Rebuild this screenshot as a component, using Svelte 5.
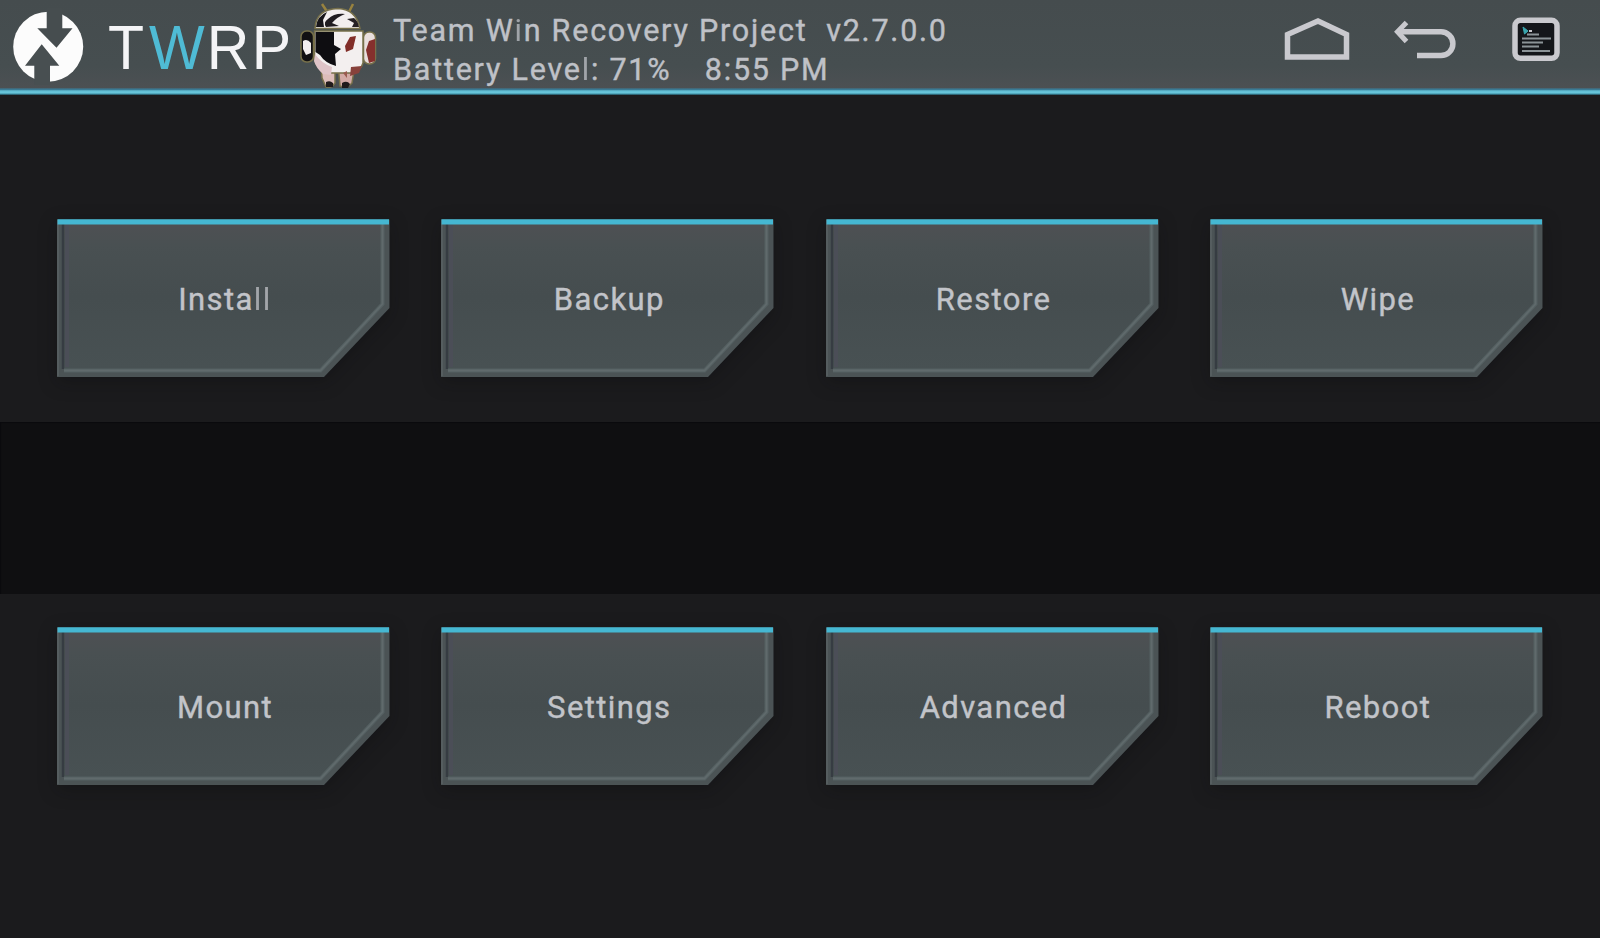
<script>
  const rows = [
    ['Install', 'Backup', 'Restore', 'Wipe'],
    ['Mount', 'Settings', 'Advanced', 'Reboot'],
  ];
</script>

{#snippet tile(label)}
  <button class="tile">
    <svg class="plate" viewBox="0 0 334 160" width="334" height="160" aria-hidden="true">
      <defs>
        <linearGradient id="face" x1="0" y1="0" x2="0" y2="1">
          <stop offset="0" stop-color="#4e5053" />
          <stop offset=".16" stop-color="#495052" />
          <stop offset=".5" stop-color="#454d4f" />
          <stop offset="1" stop-color="#485153" />
        </linearGradient>
      </defs>
      <path d="M0 .5H332.500V89L267 158H0Z" fill="#4b5355" />
      <path d="M7 4H325.500V84L263.500 151H7Z" fill="url(#face)" />
      <path d="M1 5V157" stroke="#555d5f" stroke-width="2" fill="none" />
      <path d="M6 5V150" stroke="#363c42" stroke-width="2.500" fill="none" />
      <path d="M10 5V148" stroke="#4b4e57" stroke-width="4" fill="none" />
      <path d="M7 151.500H263.500L325.500 85V5" stroke="#556062" stroke-width="4" fill="none" />
      <path d="M7 151.500H263.500L325.500 85V5" stroke="#606a6c" stroke-width="1.800" fill="none" />
      <path d="M.5 .3H332V5.500H.5Z" fill="#45b7d2" />
    </svg>
    <span class="label">{#if label === 'Install'}Insta<span class="thin">ll</span>{:else}{label}{/if}</span>
  </button>
{/snippet}

<div class="screen">
  <header>
    <svg class="logo" width="96" height="88" viewBox="0 0 96 88" aria-hidden="true">
      <circle cx="48.200" cy="46.700" r="35" fill="#fcfcfc" />
      <path d="M46.700 8V28.300H37.300L56.500 47.700L72.500 28.300H62.300V8Z" fill="#464d4f" />
      <path d="M34.300 85V65.700H25L41.700 44.300L59.300 65.700H50V85Z" fill="#484f51" />
    </svg>
    <svg class="word" width="200" height="88" viewBox="0 0 200 88">
      <text y="69.300" font-size="63.500" transform="scale(.93 1)"><tspan x="13">T</tspan><tspan x="57">W</tspan><tspan x="119.200">R</tspan><tspan x="167.600">P</tspan></text>
    </svg>
    <svg class="cow" width="84" height="88" viewBox="296 0 84 88" aria-hidden="true">
      <path d="M322 4L328 13M353 4L349 12" stroke="#98823f" stroke-width="2.500" fill="none" />
      <g stroke="#77704a" stroke-width="1.500">
        <path d="M321 64H335V83Q331 89 326 87L322 78Z" fill="#dcbcb9" />
        <path d="M338 64H355L352 83Q347 89 340 86Z" fill="#d3aaa6" />
        <rect x="301" y="31" width="12.500" height="31" rx="5.500" fill="#111013" />
        <rect x="363.500" y="32" width="12" height="32" rx="5.500" fill="#e9dfdd" />
        <path d="M314.500 31H363V63Q361 70 353 73H327Q317 69 314.500 60Z" fill="#f3efef" />
        <path d="M315 28.500Q316 9 338 8.500Q356 9 360 28.500Z" fill="#f2eeee" />
      </g>
      <path d="M316 27Q317 16 327 12L323 20L324 27Z" fill="#18161a" />
      <path d="M326 27Q323 22 328 19Q334 13 345 14Q337 17 332 23L339 26Z" fill="#201c20" />
      <path d="M347 19L354 18Q358 21 359 27H352L354 23Z" fill="#252023" />
      <path d="M315.500 32H334V45L341 49L335 54L336 66Q325 63 320 55L315.500 52Z" fill="#0e0d11" />
      <path d="M315 54Q321 63 332 67L331 75L323 74Q316 68 314 61Z" fill="#dfc4c8" />
      <path d="M303 41Q307 38 311 43V53L306 55L303 49Z" fill="#f3eeee" />
      <path d="M350 37L356 36L353 49L346 52L345 46Z" fill="#812d28" />
      <path d="M369 41L375 39V61L369 63L366 50Z" fill="#85302d" />
      <path d="M351 67L362 66L359 73L350 76Z" fill="#87413b" />
      <path d="M326 82Q330 80 333 83V87H326ZM342 83Q347 80 350 84L348 88H342Z" fill="#211b1c" />
      <path d="M343 73L347 71L347 78Z" fill="#9a5b50" />
    </svg>
    <div class="status">
      <div>Team W<span class="thin">i</span>n Recovery Project&nbsp; v2.7.0.0</div>
      <div>Battery Leve<span class="thin">l</span>: 71%<span class="time">8:55 PM</span></div>
    </div>
    <nav>
      <svg width="330" height="88" viewBox="1270 0 330 88" fill="none" stroke="#c9c9ce" aria-hidden="true">
        <path d="M1287.500 57V34.500L1318 21L1346.500 34.500V57Z" stroke-width="5.500" />
        <path d="M1398 31.800H1441A11.900 11.900 0 0 1 1441 55.600H1417" stroke-width="5.500" />
        <path d="M1406.500 22.500L1397.500 31.800L1406.500 41.500" stroke-width="5" />
        <rect x="1515" y="20.300" width="42" height="38" rx="5.500" fill="#14161a" stroke-width="5.500" />
        <path d="M1523 27L1528 31L1524.500 34Z" fill="#3aa6ae" stroke="#3aa6ae" />
        <path d="M1529 31H1532" stroke-width="2" />
        <path d="M1527 34.500H1539M1522 38.500H1551M1522 42.500H1543M1522 46.500H1539M1522 51H1550" stroke="#8b9397" stroke-width="2" />
      </svg>
    </nav>
  </header>
  <div class="rule"></div>
  <main>
    <section class="upper">{#each rows[0] as l}{@render tile(l)}{/each}</section>
    <div class="band"></div>
    <section class="lower">{#each rows[1] as l}{@render tile(l)}{/each}</section>
  </main>
</div>

<style>
  :global(body) { margin: 0; background: #1b1b1d; }
  .screen { width: 1600px; height: 938px; overflow: hidden; display: flex; flex-direction: column; background: #1b1b1d; font-family: Roboto, sans-serif; }
  header { height: 88px; flex: none; display: flex; background: linear-gradient(#454c4e, #464e50 75%, #4c5053); }
  header svg { flex: none; display: block; }
  .rule { height: 7px; flex: none; background: linear-gradient(#45606d, #3a7c96 22%, #62bfd4 42%, #68c6da 68%, #4397ad 85%, #1e3b45); }
  .word text { font-family: "Liberation Sans", Arial, sans-serif; fill: #f4f4f6; }
  .word tspan:nth-child(2) { fill: #4fbbd5; }
  .status { width: 877px; padding: 10.500px 0 0 13px; font-size: 30.500px; line-height: 39px; letter-spacing: 1.770px; color: #bfc1c7; white-space: nowrap; -webkit-text-stroke: .4px #bfc1c7; }
  .thin { opacity: .75; -webkit-text-stroke: 0; }
  .time { margin-left: 33.500px; }
  main { flex: 1; display: flex; flex-direction: column; }
  section { display: grid; grid-template-columns: repeat(4, 332.500px); column-gap: 51.800px; padding-left: 57px; }
  .upper { height: 203px; padding-top: 124px; }
  .lower { padding-top: 33px; }
  .band { height: 172px; flex: none; background: #0f0f11; box-shadow: inset 1px 1px 1px #0a0a0e; }
  .tile { all: unset; display: grid; width: 334px; height: 158px; place-items: center; }
  .plate { grid-area: 1 / 1; filter: drop-shadow(0 5px 9px rgba(8, 8, 10, .3)); }
  .label { grid-area: 1 / 1; z-index: 1; padding-left: 2px; font-size: 31px; letter-spacing: 1.400px; color: #c2c4c9; -webkit-text-stroke: .4px #c2c4c9; }
</style>
